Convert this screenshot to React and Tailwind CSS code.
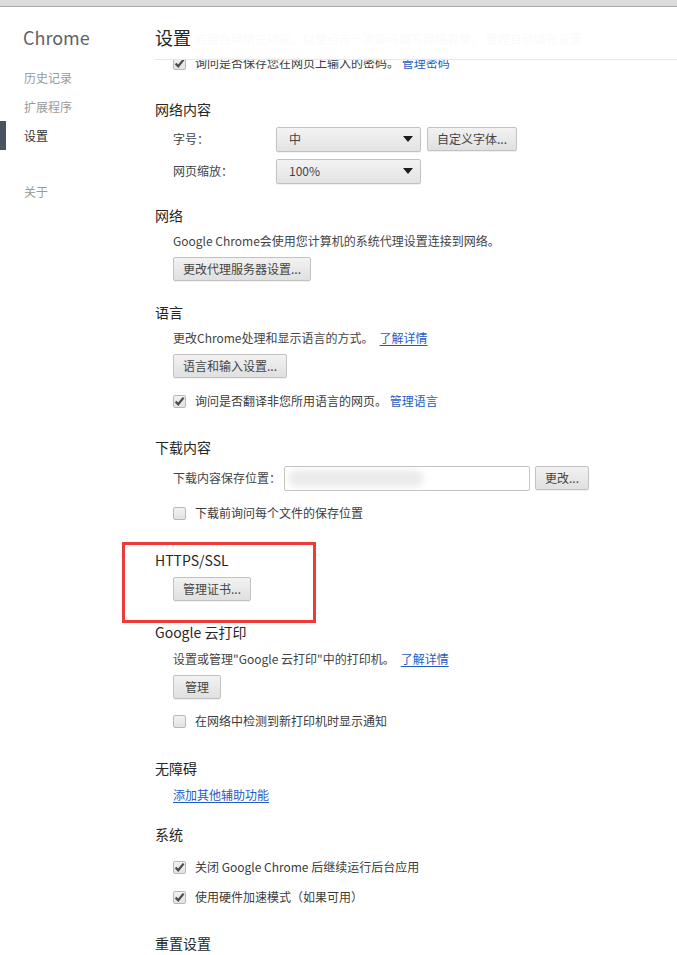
import React from "react";

const Button = ({ children, className = "" }) => (
  <button
    className={`h-[24px] px-[9px] rounded-[2px] border border-[#c2c2c2] bg-gradient-to-b from-[#f2f2f2] to-[#e0e0e0] text-[12px] leading-none text-[#444] shadow-[0_1px_0_rgba(0,0,0,0.06)] ${className}`}
  >
    {children}
  </button>
);

const Checkbox = ({ checked }) => (
  <span className="flex w-[13px] h-[13px] shrink-0 items-center justify-center rounded-[2px] border border-[#b8b8b8] bg-gradient-to-b from-[#f2f2f2] to-[#e2e2e2]">
    {checked && (
      <svg width="11" height="11" viewBox="0 0 11 11">
        <path d="M1.6 5.6 L4.2 8.3 L9.6 1.6" fill="none" stroke="#4a4a4a" strokeWidth="2.2" />
      </svg>
    )}
  </span>
);

const CheckRow = ({ checked, children, className = "" }) => (
  <div className={`flex h-5 items-center ${className}`}>
    <Checkbox checked={checked} />
    <span className="ml-[9px] text-[#3c3c3c]">{children}</span>
  </div>
);

const Select = ({ value }) => (
  <div className="flex h-[25px] w-[145px] items-center justify-between rounded-[2px] border border-[#c2c2c2] bg-gradient-to-b from-[#f3f3f3] to-[#e3e3e3] pl-[12px] pr-[7px] text-[#444] shadow-[0_1px_0_rgba(0,0,0,0.06)]">
    <span>{value}</span>
    <svg width="10" height="6" viewBox="0 0 10 6">
      <path d="M0 0 H10 L5 6 Z" fill="#1e1e1e" />
    </svg>
  </div>
);

const Section = ({ title, className = "", children }) => (
  <section className={`relative ${className}`}>
    <h3 className="h-5 text-[14px] leading-5 text-[#262626]">{title}</h3>
    <div className="pl-[18px]">{children}</div>
  </section>
);

const Link = ({ children, underline }) => (
  <a className={`text-[#1f5bc6] ${underline ? "underline underline-offset-2" : ""}`}>{children}</a>
);

export default function App() {
  return (
    <div className="w-[677px] h-[955px] overflow-hidden bg-white text-[12px] text-[#333] font-['Noto_Sans_CJK_SC','Noto_Sans',sans-serif]">
      {/* 顶部灰条 */}
      <div className="h-[7px] bg-[#dcdcdc] border-b border-[#a8a8a8]" />

      <div className="flex">
        {/* 左侧导航 */}
        <aside className="w-[155px] shrink-0">
          <div className="mt-[18px] h-[24px] pl-[23px] text-[18px] leading-[24px] text-[#5f6368]">Chrome</div>
          <ul className="mt-[14px]">
            <li className="flex h-[29px] items-center pl-[24px] text-[#999]">历史记录</li>
            <li className="flex h-[29px] items-center pl-[24px] text-[#999]">扩展程序</li>
            <li className="flex h-[29px] items-center border-l-[6px] border-[#4b5362] pl-[18px] text-[#333]">设置</li>
            <li className="mt-[27px] flex h-[29px] items-center pl-[24px] text-[#999]">关于</li>
          </ul>
        </aside>

        {/* 主内容 */}
        <main className="relative flex-1 pt-[46px]">
          <header className="absolute left-0 right-0 top-0 z-10 flex h-[53px] items-start border-b border-[#e8e8e8] bg-white/95 pt-[18px]">
            <h1 className="h-[24px] text-[18px] leading-[24px] text-[#262626]">设置</h1>
            <span className="ml-[4px] mt-[5px] text-[12px] text-[#fafafa]">启用自动填充功能，以便点击一次即可填写网络表单。 管理自动填充设置</span>
          </header>

          <div className="pl-[18px]">
            <CheckRow checked>
              询问是否保存您在网页上输入的密码。 <Link>管理密码</Link>
            </CheckRow>
          </div>

          <Section title="网络内容" className="mt-[26px]">
            <div className="mt-[8px] flex h-[24px] items-center">
              <span className="w-[103px] text-[#444]">字号：</span>
              <Select value="中" />
              <Button className="ml-[6px]">自定义字体...</Button>
            </div>
            <div className="mt-[8px] flex h-[24px] items-center">
              <span className="w-[103px] text-[#444]">网页缩放：</span>
              <Select value="100%" />
            </div>
          </Section>

          <Section title="网络" className="mt-[22px]">
            <div className="mt-[6px] flex h-5 items-center text-[#444]">Google Chrome会使用您计算机的系统代理设置连接到网络。</div>
            <Button className="mt-[6px]">更改代理服务器设置...</Button>
          </Section>

          <Section title="语言" className="mt-[21px]">
            <div className="mt-[6px] flex h-5 items-center text-[#444]">
              更改Chrome处理和显示语言的方式。
              <span className="ml-[6px]">
                <Link underline>了解详情</Link>
              </span>
            </div>
            <Button className="mt-[6px]">语言和输入设置...</Button>
            <CheckRow checked className="mt-[13px]">
              询问是否翻译非您所用语言的网页。 <Link>管理语言</Link>
            </CheckRow>
          </Section>

          <Section title="下载内容" className="mt-[26px]">
            <div className="mt-[8px] flex h-[26px] items-center">
              <span className="w-[111px] text-[#444]">下载内容保存位置：</span>
              <div className="flex h-[25px] w-[246px] items-center overflow-hidden rounded-[2px] border border-[#c4c4c4] bg-white">
                <div className="ml-[3px] h-[17px] w-[136px] rounded-full bg-[#ececec] blur-[3px]" />
              </div>
              <Button className="ml-[5px]">更改...</Button>
            </div>
            <CheckRow className="mt-[12px]">下载前询问每个文件的保存位置</CheckRow>
          </Section>

          <Section title="HTTPS/SSL" className="mt-[27px]">
            <Button className="mt-[7px]">管理证书...</Button>
            {/* 红色标注框 */}
            <div className="absolute -left-[33px] -top-[8px] h-[81px] w-[194px] border-[3px] border-[#ef3a3a]" />
          </Section>

          <Section title="Google 云打印" className="mt-[21px]">
            <div className="mt-[7px] flex h-5 items-center text-[#444]">
              设置或管理"Google 云打印"中的打印机。
              <span className="ml-[6px]">
                <Link underline>了解详情</Link>
              </span>
            </div>
            <Button className="mt-[6px] px-[11px]">管理</Button>
            <CheckRow className="mt-[12px]">在网络中检测到新打印机时显示通知</CheckRow>
          </Section>

          <Section title="无障碍" className="mt-[27px]">
            <div className="mt-[7px] flex h-5 items-center">
              <Link underline>添加其他辅助功能</Link>
            </div>
          </Section>

          <Section title="系统" className="mt-[19px]">
            <CheckRow checked className="mt-[13px]">关闭 Google Chrome 后继续运行后台应用</CheckRow>
            <CheckRow checked className="mt-[10px]">使用硬件加速模式（如果可用）</CheckRow>
          </Section>

          <Section title="重置设置" className="mt-[26px]" />
        </main>
      </div>
    </div>
  );
}
